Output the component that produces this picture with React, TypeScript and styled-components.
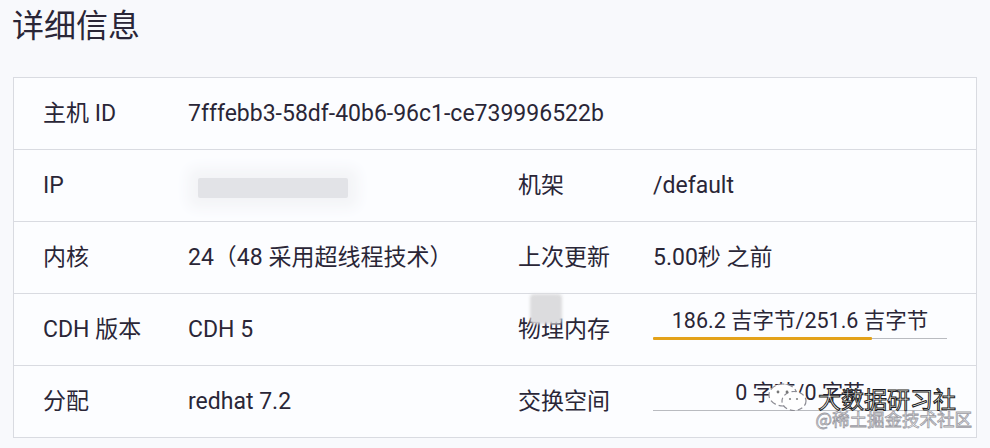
import React from "react";
import styled, { createGlobalStyle } from "styled-components";

const Global = createGlobalStyle`
  html, body { margin: 0; padding: 0; background: #f8f9fc; }
  body { font-family: Roboto, "Noto Sans CJK SC", sans-serif; color: #2a2637; }
`;

const Page = styled.div`
  position: relative;
  width: 990px;
  height: 448px;
  overflow: hidden;
  background: #f8f9fc;
`;

const Title = styled.h1`
  margin: 2px 0 33px 12px;
  font-size: 32px;
  line-height: 42px;
  font-weight: 400;
  color: #2a2637;
  font-family: "Noto Sans CJK SC", sans-serif;
`;

const Table = styled.div`
  margin: 0 13px 0 13px;
  border: 1px solid #d9dbe1;
  background: #fcfdff;
  display: flex;
  flex-direction: column;
`;

const Row = styled.div<{ $first?: boolean }>`
  display: grid;
  grid-template-columns: 145px 330px 135px 1fr;
  align-items: center;
  height: 71px;
  padding-left: 29px;
  border-top: ${(p) => (p.$first ? "none" : "1px solid #d9dbe1")};
`;

const Label = styled.div`
  position: relative;
  font-size: 23px;
  line-height: 28px;
  font-family: Roboto, "Noto Sans CJK SC", sans-serif;
  color: #2a2637;
  white-space: nowrap;
`;

const Value = styled.div`
  font-size: 23px;
  line-height: 28px;
  font-family: Roboto, "Noto Sans CJK SC", sans-serif;
  color: #2a2637;
  white-space: nowrap;
`;

const Redacted = styled.div`
  width: 150px;
  height: 20px;
  margin-left: 10px;
  margin-top: 4px;
  background: #e2e3e7;
  border-radius: 2px;
  box-shadow: 0 0 14px 10px #f3f4f7;
`;

const Smudge = styled.div`
  position: absolute;
  left: 12px;
  top: -22px;
  width: 32px;
  height: 30px;
  background: #dcdcde;
  border-radius: 4px;
  filter: blur(1.5px);
`;

const Meter = styled.div`
  display: flex;
  flex-direction: column;
  align-items: center;
  width: 294px;
  padding-bottom: 10px;
`;

const MeterText = styled.div`
  font-size: 21.5px;
  line-height: 22px;
  margin-bottom: 5px;
  white-space: nowrap;
  color: #2a2637;
  font-family: Roboto, "Noto Sans CJK SC", sans-serif;
`;

const Track = styled.div`
  position: relative;
  width: 100%;
  height: 3px;
  display: flex;
  align-items: center;
  &::before {
    content: "";
    position: absolute;
    left: 0;
    right: 0;
    top: 1px;
    height: 1px;
    background: #b9bbc0;
  }
`;

const Fill = styled.div`
  position: relative;
  height: 3px;
  background: #e3a21a;
  border-radius: 1px;
`;

const Watermark = styled.div`
  position: absolute;
  left: 766px;
  top: 383px;
  display: flex;
  flex-direction: column;
  align-items: flex-end;
  pointer-events: none;
`;

const WmTop = styled.div`
  display: flex;
  align-items: center;
  gap: 8px;
`;

const WmName = styled.span`
  font-family: "Noto Sans CJK SC", sans-serif;
  font-size: 23px;
  line-height: 30px;
  color: #ffffff;
  -webkit-text-stroke: 1px #1e1e24;
`;

const WmSite = styled.span`
  font-family: "Noto Sans CJK SC", sans-serif;
  font-size: 17.5px;
  line-height: 20px;
  margin-top: -4px;
  margin-right: -16px;
  color: #ffffff;
  -webkit-text-stroke: 0.8px #9a9aa2;
`;

const WeChatIcon = () => (
  <svg width="44" height="30" viewBox="0 0 44 30">
    <ellipse cx="17" cy="12" rx="14" ry="11" fill="#fff" stroke="#8c8c94" strokeWidth="1.2" strokeDasharray="6 3" />
    <ellipse cx="28" cy="18" rx="12" ry="9.5" fill="#fff" stroke="#8c8c94" strokeWidth="1.2" strokeDasharray="5 3" />
    <circle cx="12" cy="9" r="1.4" fill="#777" />
    <circle cx="21" cy="9" r="1.4" fill="#777" />
    <circle cx="24" cy="16" r="1.1" fill="#888" />
    <circle cx="31" cy="16" r="1.1" fill="#888" />
  </svg>
);

type MeterProps = { text: string; pct: number };
const UsageMeter = ({ text, pct }: MeterProps) => (
  <Meter>
    <MeterText>{text}</MeterText>
    <Track>
      <Fill style={{ width: `${pct}%` }} />
    </Track>
  </Meter>
);

export default function App() {
  return (
    <Page>
      <Global />
      <Title>详细信息</Title>
      <Table>
        <Row $first>
          <Label>主机 ID</Label>
          <Value>7fffebb3-58df-40b6-96c1-ce739996522b</Value>
        </Row>
        <Row>
          <Label>IP</Label>
          <Redacted />
          <Label>机架</Label>
          <Value>/default</Value>
        </Row>
        <Row>
          <Label>内核</Label>
          <Value>24（48 采用超线程技术）</Value>
          <Label>上次更新</Label>
          <Value>5.00秒 之前</Value>
        </Row>
        <Row>
          <Label>CDH 版本</Label>
          <Value>CDH 5</Value>
          <Label>
            <Smudge />
            物理内存
          </Label>
          <UsageMeter text="186.2 吉字节/251.6 吉字节" pct={74.5} />
        </Row>
        <Row>
          <Label>分配</Label>
          <Value>redhat 7.2</Value>
          <Label>交换空间</Label>
          <UsageMeter text="0 字节/0 字节" pct={0} />
        </Row>
      </Table>
      <Watermark>
        <WmTop>
          <WeChatIcon />
          <WmName>大数据研习社</WmName>
        </WmTop>
        <WmSite>@稀土掘金技术社区</WmSite>
      </Watermark>
    </Page>
  );
}
